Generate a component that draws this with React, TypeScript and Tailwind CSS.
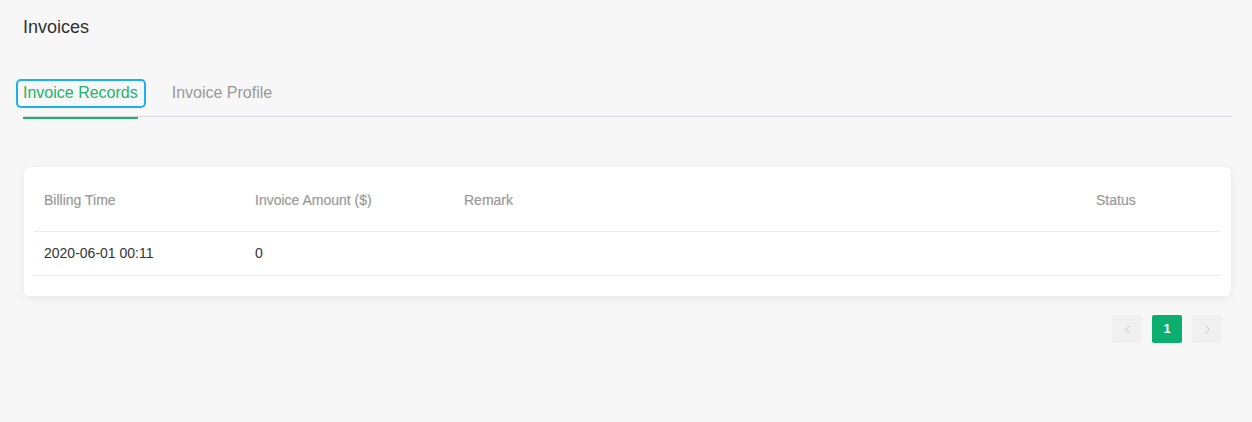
import { ChevronLeft, ChevronRight } from "lucide-react";

const columns = [
  { key: "time", label: "Billing Time", width: "w-[211px]" },
  { key: "amount", label: "Invoice Amount ($)", width: "w-[209px]" },
  { key: "remark", label: "Remark", width: "flex-1" },
  { key: "status", label: "Status", width: "w-[135px]" },
];

const rows = [{ time: "2020-06-01 00:11", amount: "0", remark: "", status: "" }];

export default function App() {
  return (
    <div
      className="w-[1252px] h-[422px] bg-[#f7f7f7] px-[23px] pt-[16px]"
      style={{ fontFamily: '"Liberation Sans", Arial, sans-serif' }}
    >
      <h1 className="text-[18px] leading-[22px] text-[#303133]">Invoices</h1>

      {/* tabs */}
      <div className="relative mt-[42px] flex items-end gap-[34px] border-b border-[#d8d8e0] h-[37px] mr-[-3px]">
        <div className="relative h-full">
          <div className="absolute left-[-7px] top-[-1px] w-[130px] h-[29px] rounded-[5px] border-2 border-[#1ab0f5]" />
          <span className="block text-[16px] leading-[25px] text-[#20b36f]">Invoice Records</span>
          <div className="absolute left-0 right-0 bottom-[-3px] h-[2px] bg-[#20b36f]" />
        </div>
        <span className="block self-start text-[16px] leading-[25px] text-[#999]">Invoice Profile</span>
      </div>

      {/* table card */}
      <div className="mt-[50px] ml-[1px] w-[1207px] rounded-[6px] bg-white px-[10px] pt-[3px] pb-[20px] shadow-[0_2px_10px_rgba(0,0,0,0.07)]">
        <div className="flex h-[62px] items-center border-b border-[#ebebeb]">
          {columns.map((c) => (
            <div key={c.key} className={`${c.width} pl-[10px] text-[14px] text-[#999] [-webkit-text-stroke:0.2px_#999]`}>
              {c.label}
            </div>
          ))}
        </div>
        {rows.map((r, i) => (
          <div key={i} className="flex h-[44px] items-center border-b border-[#ebebeb]">
            <div className="w-[211px] pl-[10px] text-[14px] text-[#333]">{r.time}</div>
            <div className="w-[209px] pl-[10px] text-[14px] text-[#333]">{r.amount}</div>
            <div className="flex-1 pl-[10px] text-[14px] text-[#333]">{r.remark}</div>
            <div className="w-[135px] pl-[10px] text-[14px] text-[#333]">{r.status}</div>
          </div>
        ))}
      </div>

      {/* pagination */}
      <div className="mt-[19px] flex justify-end gap-[10px] w-[1199px]">
        <button className="flex h-[28px] w-[30px] items-center justify-center rounded-[2px] bg-[#f0f0f0] text-[#c0c0c0]">
          <ChevronLeft size={15} strokeWidth={1.5} />
        </button>
        <button className="flex h-[28px] w-[30px] items-center justify-center rounded-[2px] bg-[#0aae6f] text-[13px] font-bold text-white">
          1
        </button>
        <button className="flex h-[28px] w-[30px] items-center justify-center rounded-[2px] bg-[#f0f0f0] text-[#c0c0c0]">
          <ChevronRight size={15} strokeWidth={1.5} />
        </button>
      </div>
    </div>
  );
}
